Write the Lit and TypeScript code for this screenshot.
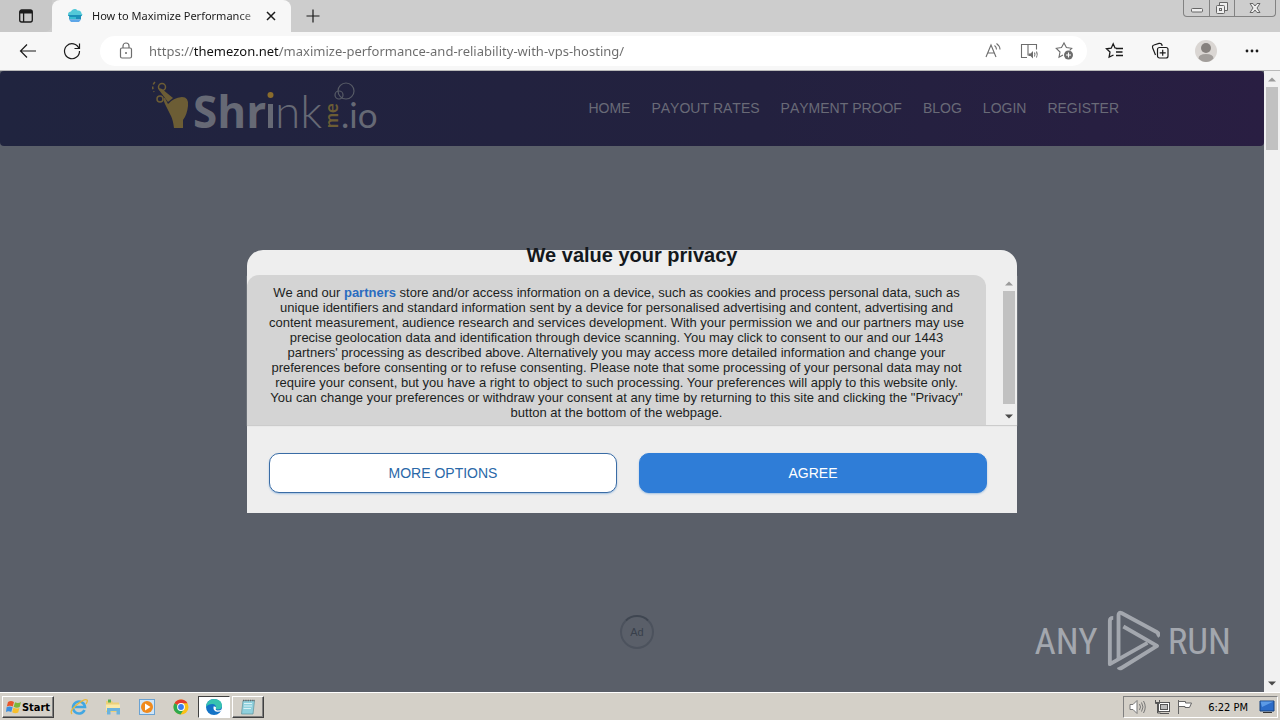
import { LitElement, html, css } from "lit";
import { customElement } from "lit/decorators.js";

const navItems = ["HOME", "PAYOUT RATES", "PAYMENT PROOF", "BLOG", "LOGIN", "REGISTER"];

@customElement("scroll-rail")
class ScrollRail extends LitElement {
  static styles = css`
    :host { display: flex; flex-direction: column; align-items: center; width: 16px; flex: none; }
    .arrow { width: 16px; height: 16px; flex: none; display: block; }
    .track { flex: 1; width: 12px; min-height: 0; }
    .thumb { background: #c1c1c1; width: 12px; height: var(--thumb, 63px); }
  `;
  render() {
    return html`
      <svg class="arrow" viewBox="0 0 16 16"><path d="M4 10.5 8 6.5l4 4z" fill="#9a9a9a" /></svg>
      <div class="track"><div class="thumb"></div></div>
      <svg class="arrow" viewBox="0 0 16 16"><path d="M4 5.5h8l-4 4z" fill="#4a4a4a" /></svg>
    `;
  }
}

@customElement("browser-chrome")
class BrowserChrome extends LitElement {
  static styles = css`
    :host { display: block; flex: none; font-family: "Noto Sans", "Open Sans", sans-serif; border-bottom: 1px solid #b9b9b9; }
    button { border: 0; background: none; padding: 0; margin: 0; font: inherit; color: #1b1b1b; display: flex; align-items: center; justify-content: center; }
    svg { display: block; fill: none; stroke: currentColor; }
    .solid { stroke: none; }
    .strip { display: flex; height: 32px; background: #cdcdcd; align-items: stretch; }
    .actions { width: 52px; background: #c8c8c8; border-radius: 0 0 8px 0; }
    .tab { display: flex; align-items: center; width: 239px; box-sizing: border-box; padding: 0 12px 0 14px; background: #f7f7f7; border-radius: 8px 8px 0 0; }
    .title { flex: 1; margin: 0 8px 0 8px; font-size: 11px; line-height: 20px; white-space: nowrap; color: #1b1b1b; -webkit-mask-image: linear-gradient(90deg, #000 90%, rgba(0, 0, 0, 0.4)); mask-image: linear-gradient(90deg, #000 90%, rgba(0, 0, 0, 0.4)); }
    .plus { width: 44px; }
    .wins { margin-left: auto; margin-right: 4px; display: flex; height: 17px; border: 1px solid #828282; border-top: 0; border-radius: 0 0 4px 4px; box-sizing: border-box; }
    .wins button { width: 25px; color: #666; }
    .wins button + button { border-left: 1px solid #828282; }
    .wins .close { width: 41px; }
    .bar { display: flex; align-items: center; height: 38px; background: #f7f7f7; padding: 0 13px 0 14px; }
    .nav { width: 28px; height: 28px; margin-right: 16px; }
    .field { flex: 1; min-width: 0; height: 30px; display: flex; align-items: center; background: #fff; border-radius: 15px; margin: 0 12px 0 -2px; padding: 0 12px 0 16px; color: #6d6d6d; }
    .field button { color: #6d6d6d; width: 20px; margin-left: 16px; }
    .url { flex: 1; min-width: 0; border: 0; outline: 0; padding: 0; margin-left: 13px; height: 24px; font: 13px "Noto Sans", sans-serif; color: #6b6b6b; background: linear-gradient(90deg, #6b6b6b 45px, #111 45px, #111 130px, #6b6b6b 130px); -webkit-background-clip: text; background-clip: text; -webkit-text-fill-color: transparent; }
    .tools { display: flex; gap: 16px; }
    .tools button { width: 30px; }
    .tools svg, .nav svg { flex: none; }
  `;
  render() {
    return html`
      <div class="strip">
        <button class="actions" aria-label="Tab actions">
          <svg width="16" height="16" viewBox="0 0 16 16" stroke-width="1.3"><rect x="1.7" y="2" width="12.6" height="12" rx="2" /><path d="M2 3.8h12" stroke-width="3.4" /><path d="M5.6 5v9" /></svg>
        </button>
        <div class="tab">
          <svg class="solid" width="18" height="16" viewBox="0 0 18 16"><path d="M2 6.5C2 4 4 3.4 5 3.5 6 1 9.500 0 11.500 2.500 14 2 15.500 3.500 15.500 5.500L16.500 6.500 15.500 8H2z" fill="#53c9d8" /><path d="M2 7h14l-1 1.500v3H3.200v-3z" fill="#1c8fb8" /><path d="M4 9h6v2H4z" fill="#35bcd0" /><path d="M3 11.500h12L13 14H5z" fill="#5da6e8" /></svg>
          <span class="title">How to Maximize Performance</span>
          <button aria-label="Close tab"><svg width="16" height="16" viewBox="0 0 16 16" stroke-width="1.5"><path d="m4 4 8 8M12 4l-8 8" /></svg></button>
        </div>
        <button class="plus" aria-label="New tab"><svg width="16" height="16" viewBox="0 0 16 16" stroke-width="1.2"><path d="M8 1.500v13M1.500 8h13" /></svg></button>
        <div class="wins">
          <button aria-label="Minimize"><svg width="14" height="14" viewBox="0 0 14 14"><rect x="1.500" y="7.500" width="11" height="3.500" rx="1" fill="#eee" /></svg></button>
          <button aria-label="Restore"><svg width="14" height="14" viewBox="0 0 14 14"><path d="M4.500 4V1.500h8v8H10" fill="#eee" /><rect x="1.500" y="4.500" width="8" height="8" rx="1" fill="#eee" /><rect x="4.500" y="7.500" width="2" height="2" /></svg></button>
          <button class="close" aria-label="Close"><svg width="14" height="12" viewBox="0 0 14 12"><path d="M2 1.500h3l2 2.500 2-2.500h3L9 6l3 4.500H9L7 8l-2 2.500H2L5 6z" fill="#eee" /></svg></button>
        </div>
      </div>
      <div class="bar">
        <button class="nav" aria-label="Back"><svg width="20" height="20" viewBox="0 0 20 20" stroke-width="1.200"><path d="M18 10H2.500M9 3.500 2.500 10 9 16.500" /></svg></button>
        <button class="nav" aria-label="Refresh"><svg width="20" height="20" viewBox="0 0 20 20" stroke-width="1.200"><path d="M17 7.500A7.500 7.500 0 1 0 17.500 10M17.500 2.500v5h-5" /></svg></button>
        <div class="field">
          <svg width="20" height="20" viewBox="0 0 20 20" stroke-width="1.200"><rect x="4.500" y="7" width="11" height="10" rx="1.500" /><path d="M7 7V5a3 3 0 0 1 6 0v2" /><circle class="solid" cx="10" cy="12" r="1" fill="#6d6d6d" /></svg>
          <input class="url" aria-label="Address" value="https://themezon.net/maximize-performance-and-reliability-with-vps-hosting/" />
          <button aria-label="Read aloud"><svg width="20" height="20" viewBox="0 0 20 20" stroke-width="1.100"><path d="M3 16 8 4l5 12M4.800 12h6.400M11.500 4.500q2 1.500 2 4M13.500 2.500q3.500 2.500 3.500 6" /></svg></button>
          <button aria-label="Immersive reader"><svg width="20" height="20" viewBox="0 0 20 20" stroke-width="1.100"><path d="M8 16.500H2.500v-13H9v11M9 3.500h8.500v5" /><path class="solid" d="M9.500 12.500h2l2.500-2.500v7.500L11.500 15h-2z" fill="#6d6d6d" /><path d="M15.500 11.500q1 2 0 4M17.500 10.500q1.500 3 0 6" /></svg></button>
          <button aria-label="Add to favorites"><svg width="20" height="20" viewBox="0 0 20 20" stroke-width="1.100"><path d="M8 14l-4 2.300 1-5.300-3.700-3.700 5.200-.700L9 2l2.400 4.600 5.300.700-2 2" /><circle class="solid" cx="13.500" cy="14" r="4.500" fill="#6d6d6d" /><path d="M13.500 11.500v5M11 14h5" stroke="#fff" /></svg></button>
        </div>
        <div class="tools">
          <button aria-label="Favorites"><svg width="20" height="20" viewBox="0 0 20 20" stroke-width="1.300"><path d="M12.500 7.200 11 7 9.200 2.800 7.200 7.200l-4.700.600L6 11l-.900 5.200L9.500 14M12 7.500h7M12 11h6.500M12 14.500h7" /></svg></button>
          <button aria-label="Collections"><svg width="20" height="20" viewBox="0 0 20 20" stroke-width="1.200"><path d="M5.500 14 2.700 7Q2 4.500 4 4L9 2.400Q11.500 2 12 4v1" /><rect x="7.500" y="6.500" width="10.500" height="10.500" rx="2" /><path d="M12.700 8.800v6M9.700 11.800h6" /></svg></button>
          <button aria-label="Profile"><svg class="solid" width="24" height="24" viewBox="0 0 24 24"><circle cx="12" cy="12" r="11" fill="#dad6d3" /><circle cx="12" cy="9" r="5" fill="#86817e" /><path d="M4.500 19.500q0-4.500 7.500-4.500t7.500 4.500Q16 23 12 23t-7.500-3.500z" fill="#a29e9b" /></svg></button>
          <button aria-label="Settings and more"><svg class="solid" width="20" height="20" viewBox="0 0 20 20"><g fill="#1b1b1b"><circle cx="5" cy="10" r="1.400" /><circle cx="10" cy="10" r="1.400" /><circle cx="15" cy="10" r="1.400" /></g></svg></button>
        </div>
      </div>
    `;
  }
}

@customElement("consent-dialog")
class ConsentDialog extends LitElement {
  static styles = css`
    :host { display: block; width: 61%; min-width: 640px; max-width: 770px; background: #eee; border-radius: 16px 16px 0 0; font-family: "Liberation Sans", Arial, sans-serif; color: #14181c; }
    .title { margin: -7px 0 8px; font-size: 20px; line-height: 24px; font-weight: 700; text-align: center; }
    .body { display: flex; height: 150px; box-shadow: 0 1px 1px #ccc; }
    .copy { flex: 1; box-sizing: border-box; margin: 0; padding: 10px 19px 0; overflow: hidden; background: #d4d4d4; border-radius: 12px 12px 0 0; text-align: center; font-size: 13px; line-height: 15px; color: #1c1f22; }
    .copy a { color: #2a6cc0; font-weight: 700; text-decoration: none; }
    scroll-rail { margin-left: 15px; --thumb: 113px; }
    .actions { display: grid; grid-template-columns: 1fr 1fr; gap: 22px; padding: 28px 30px 20px 22px; }
    button { height: 40px; border-radius: 10px; font: 14px "Liberation Sans", Arial, sans-serif; padding: 0; border: 1px solid #2f7dd7; box-shadow: 0 1px 2px #9fbfe0; }
    .more { background: #fff; color: #2a68a8; border-color: #3a6ca5; }
    .agree { background: #2f7dd7; color: #fff; }
  `;
  render() {
    return html`
      <h2 class="title">We value your privacy</h2>
      <div class="body">
        <p class="copy">We and our <a href="#partners">partners</a> store and/or access information on a device, such as cookies and process personal data, such as unique identifiers and standard information sent by a device for personalised advertising and content, advertising and content measurement, audience research and services development. With your permission we and our partners may use precise geolocation data and identification through device scanning. You may click to consent to our and our 1443 partners' processing as described above. Alternatively you may access more detailed information and change your preferences before consenting or to refuse consenting. Please note that some processing of your personal data may not require your consent, but you have a right to object to such processing. Your preferences will apply to this website only. You can change your preferences or withdraw your consent at any time by returning to this site and clicking the "Privacy" button at the bottom of the webpage.</p>
        <scroll-rail></scroll-rail>
      </div>
      <div class="actions">
        <button class="more">MORE OPTIONS</button>
        <button class="agree">AGREE</button>
      </div>
    `;
  }
}

@customElement("site-page")
class SitePage extends LitElement {
  static styles = css`
    :host { display: flex; flex: 1; min-height: 0; position: relative; background: #5a5f69; font-family: "Liberation Sans", Arial, sans-serif; }
    .content { flex: 1; min-width: 0; display: flex; flex-direction: column; position: relative; }
    .header { display: flex; justify-content: space-between; height: 75px; box-sizing: border-box; padding: 0 145px 0 151px; border-radius: 4px; background: linear-gradient(90deg, #20243f, #23213f 60%, #291e42); }
    .logo { display: block; margin-top: 8px; overflow: visible; font-family: "Open Sans", "Noto Sans", sans-serif; }
    .thin { font-family: Lato, sans-serif; }
    .nav { display: flex; align-items: center; gap: 21px; font-size: 14px; line-height: 16px; padding-bottom: 1px; font-kerning: none; }
    .nav a { color: #696a77; text-decoration: none; white-space: nowrap; }
    .main { flex: 1; display: flex; align-items: flex-end; justify-content: center; padding: 0 0 43px 10px; }
    .ad { width: 34px; height: 34px; box-sizing: border-box; border: 2px solid #4c525d; border-top-color: #3f4651; border-radius: 50%; display: flex; align-items: center; justify-content: center; font-size: 11px; color: #383f4b; }
    .overlay { position: absolute; inset: 0; display: grid; place-items: center; }
    .mark { position: absolute; right: 49px; bottom: 20px; display: flex; align-items: center; gap: 8px; color: #a3a7ae; font: 37px "Liberation Sans Narrow", "Roboto Condensed", "DejaVu Sans Condensed", sans-serif; }
    .rail { background: #f1f1f1; }
  `;
  render() {
    return html`
      <div class="content">
        <header class="header">
          <svg class="logo" width="228" height="60" viewBox="0 0 228 60" aria-label="Shrinkme.io">
            <g fill="#6c5d35"><path d="M17 25q5-6 14-7 7 0 6 9-1 9-5 14v8H23q-1-8-3-12l-6-12q-3-7 0-6z" /><path d="M17 23 8 11q-1-3 3-1l11 9z" /></g>
            <g fill="none" stroke="#6c5d35" stroke-width="1.500"><circle cx="11" cy="8" r="3.500" /><circle cx="9" cy="20" r="3" /><path d="M4 3Q0 7 3 13" stroke-dasharray="3 2" /></g>
            <g fill="#666975">
              <text x="42" y="49" font-size="44" font-weight="700">Shr</text>
              <path d="M117 25h5v24h-5z" />
              <text class="thin" x="124" y="49" font-size="46" font-weight="300">nk</text>
              <text class="thin" x="190" y="49" font-size="35">.io</text>
            </g>
            <circle cx="119.500" cy="16" r="3" fill="#8a6c2c" />
            <text transform="translate(187 49) rotate(-90)" font-size="18" font-weight="700" class="thin" fill="#6c5d35">me</text>
            <g fill="none" stroke="#575b66" stroke-width="1.200"><circle cx="195" cy="12" r="8" /><circle cx="188" cy="16" r="4" /></g>
          </svg>
          <nav class="nav">${navItems.map((n) => html`<a href="#">${n}</a>`)}</nav>
        </header>
        <main class="main"><div class="ad">Ad</div></main>
        <div class="overlay"><consent-dialog></consent-dialog></div>
      </div>
      <scroll-rail class="rail"></scroll-rail>
      <div class="mark">
        <span>ANY</span>
        <svg width="54" height="62" viewBox="0 0 56 64" fill="none" stroke="#a3a7ae" stroke-width="4" stroke-linejoin="round">
          <path d="M7.500 8Q4 8 4 11v45L43 34" /><path d="M53 27q3-2 0-4L16 3q-3-1-3 2v46" /><path d="M18 17 53 37 16 60q-2 1-3-1" />
        </svg>
        <span>RUN</span>
      </div>
    `;
  }
}

@customElement("task-bar")
class TaskBar extends LitElement {
  static styles = css`
    :host { display: flex; flex: none; height: 28px; box-sizing: border-box; align-items: center; padding: 1px 2px 0 2px; background: #d4d0c8; border-top: 1px solid #fff; font-family: "DejaVu Sans Condensed", "DejaVu Sans", sans-serif; font-size: 11px; color: #000; }
    button { display: flex; align-items: center; justify-content: center; height: 22px; padding: 0; border: 0; background: none; font: inherit; box-sizing: border-box; }
    .raised { border: 1px solid; border-color: #fff #404040 #404040 #fff; box-shadow: inset -1px -1px #808080; background: #d4d0c8; }
    .start { width: 52px; font-weight: 700; }
    .quick { display: flex; margin-left: 8px; }
    .quick button { width: 34px; }
    .task { width: 32px; }
    .pressed { border: 1px solid; border-color: #404040 #fff #fff #404040; background: #fff; margin-right: 2px; }
    .tray { margin-left: auto; display: flex; align-items: center; height: 22px; box-sizing: border-box; padding: 0 1px 0 4px; gap: 5px; border: 1px solid; border-color: #808080 #fff #fff #808080; }
    .tray time { margin: 0 5px 0 9px; white-space: nowrap; }
    svg { display: block; flex: none; }
  `;
  render() {
    return html`
      <button class="start raised">
        <svg width="16" height="16" viewBox="0 0 16 16"><path d="M2 3q3-2 6 0L6.800 7.500q-3-1.500-6 0z" fill="#e8562b" /><path d="M9 3.300q3 1.700 6-.300L13.700 8q-3 1.500-6-.200z" fill="#7cb73a" /><path d="M.600 8.300q3-1.500 6 0L5.300 13q-3-1.500-5.300 0z" fill="#3b8fe0" /><path d="M7.400 8.700q3 1.500 6 .200L12.200 13.500q-3 1.600-6-.200z" fill="#f7bf2c" /></svg>
        Start
      </button>
      <div class="quick">
        <button aria-label="Internet Explorer"><svg width="18" height="18" viewBox="0 0 18 18" fill="none"><path d="M14.500 12A6 6 0 1 1 15 9H5" stroke="#42a7e2" stroke-width="2.600" /><path d="M2 16Q-1 13 7 6.500 15 0 17 2q1 1-1 4" stroke="#e9b83a" stroke-width="1.300" /></svg></button>
        <button aria-label="Explorer"><svg width="18" height="18" viewBox="0 0 18 18"><path d="M2 3h6l1 1.500h6V14H2z" fill="#ecd079" /><path d="M4 1.500h3v3H4z" fill="#5aae52" /><path d="M2 6.500h14v6H2z" fill="#f9e9a8" /><path d="M3 10h13v6.500h-3.500V13h-6v3.500H3z" fill="#6cb3dd" /></svg></button>
        <button aria-label="Media Player"><svg width="18" height="18" viewBox="0 0 18 18"><rect x="1.500" y="1.500" width="15" height="15" fill="#cfe5f8" stroke="#6aa2d2" /><circle cx="9" cy="9" r="6" fill="#f08a1d" /><path d="M7 5.500 12.500 9 7 12.500z" fill="#fff" /></svg></button>
        <button aria-label="Chrome"><svg width="18" height="18" viewBox="0 0 18 18"><circle cx="9" cy="9" r="7.500" fill="#fbc116" /><path d="M9 9 2.500 5.200A7.500 7.500 0 0 1 15.500 5.200H9z" fill="#e33b2e" /><path d="M9 9 2.500 5.200A7.500 7.500 0 0 0 8.500 16.500L12 11z" fill="#2da94f" /><circle cx="9" cy="9" r="3.900" fill="#fff" /><circle cx="9" cy="9" r="2.900" fill="#3b7ded" /></svg></button>
      </div>
      <button class="task pressed" aria-label="Edge"><svg width="18" height="18" viewBox="0 0 18 18"><circle cx="9" cy="9" r="8" fill="#1373c6" /><path d="M1 9Q2 1 9.500 1 17 1.500 17 8q-.500 3.500-4.500 3.500-2.500-.500-1.500-2Q11 6 7.500 6 3 6 1 9z" fill="#37c3b0" /><path d="M8.500 8.500Q8 13 12 13.800q3 .200 4.500-1.300L17 11q-1.500 1.500-4.500 1.500-2.500-.500-1.500-2.500.500-2-2.500-1.500z" fill="#fff" /></svg></button>
      <button class="task raised" aria-label="Notepad"><svg width="18" height="18" viewBox="0 0 18 18"><path d="M4 2.500h11.500L14 16H2.500z" fill="#8fd0dd" stroke="#5d929c" stroke-width=".700" /><path d="M5 5.500h8M5 8h8M4.500 10.500H12" stroke="#d9f1f5" /><path d="M4 2.500h12" stroke="#666" stroke-width="1.600" stroke-dasharray="1.300 1" /></svg></button>
      <div class="tray">
        <svg width="20" height="18" viewBox="0 0 20 18" fill="none" stroke="#777"><path d="M2 6.500h3l4-4v13l-4-4H2z" fill="#fff" /><path d="M11.500 6q2 3 0 6M13.500 4.500q3 4.500 0 9M15.500 3q3.500 6 0 12" /></svg>
        <svg width="18" height="18" viewBox="0 0 18 18" fill="none" stroke="#555"><rect x="5.500" y="4.500" width="11" height="9" fill="#fff" /><rect x="7.500" y="6.500" width="7" height="5" fill="#bbb" /><path d="M7 15.500h9M2.500 2v3.500h4V2M2 4.500h5M4.500 5.500V15h3" /></svg>
        <svg width="18" height="18" viewBox="0 0 18 18" stroke="#666"><path d="M2.500 2v14M2.500 3.500h7V5h6l-2 4.500H9V8.500H2.500" fill="#fff" /></svg>
        <time>6:22 PM</time>
        <svg width="18" height="18" viewBox="0 0 18 18"><path d="M2 3h14v10H2z" fill="#2c6cc8" stroke="#17427f" /><path d="M2.500 3.500h13L4 9z" fill="#5c9ae6" /><path d="M5 14.500h9" stroke="#333" /></svg>
      </div>
    `;
  }
}

@customElement("app-root")
class AppRoot extends LitElement {
  static styles = css`
    :host { display: flex; flex-direction: column; height: 100vh; overflow: hidden; }
  `;
  render() {
    return html`<browser-chrome></browser-chrome><site-page></site-page><task-bar></task-bar>`;
  }
}
